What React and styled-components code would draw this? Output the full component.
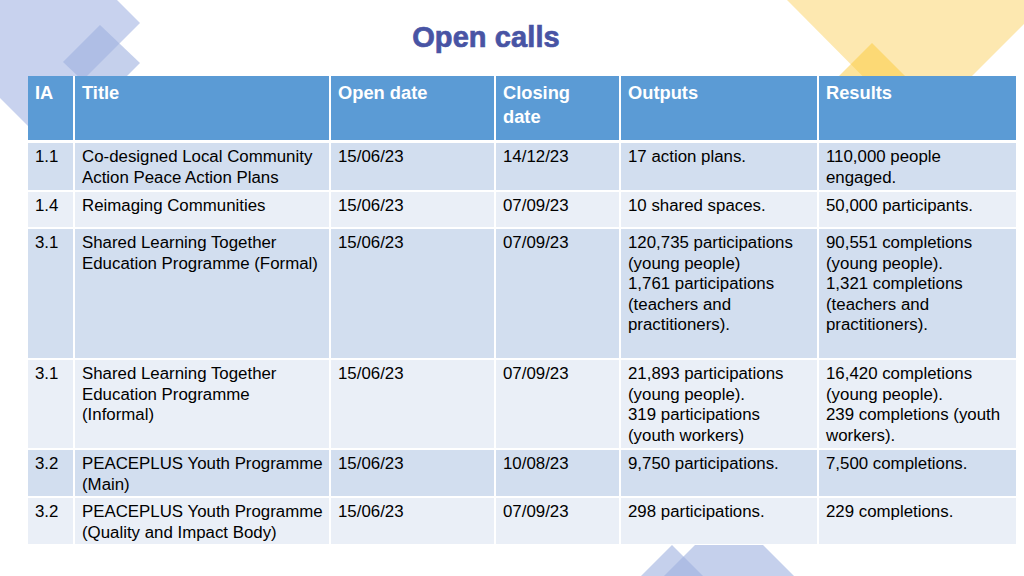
import React from 'react';
import styled, { createGlobalStyle } from 'styled-components';

const GlobalStyle = createGlobalStyle`
  html, body {
    margin: 0;
    padding: 0;
    background: #ffffff;
  }
  body {
    font-family: "Liberation Sans", Arial, sans-serif;
  }
`;

const COLUMNS = '45px 254px 163px 123px 196px 197px';

const Slide = styled.div`
  position: relative;
  width: 1024px;
  height: 576px;
  overflow: hidden;
  background: #ffffff;
`;

const Decor = styled.svg`
  position: absolute;
  inset: 0;
  width: 1024px;
  height: 576px;
  z-index: 0;
`;

const Content = styled.div`
  position: relative;
  z-index: 1;
  display: flex;
  flex-direction: column;
  padding-left: 28px;
`;

const TitleBar = styled.div`
  height: 76px;
  display: flex;
  align-items: center;
  justify-content: center;
  padding-right: 80px;
  padding-bottom: 2px;
  box-sizing: border-box;
`;

const Title = styled.h1`
  margin: 0;
  font-family: "Liberation Sans", Arial, sans-serif;
  font-size: 29px;
  font-weight: 700;
  color: #4854a4;
  -webkit-text-stroke: 0.7px #4854a4;
  letter-spacing: 0.1px;
`;

const Table = styled.div`
  width: 988px;
  display: flex;
  flex-direction: column;
  gap: 2px;
  background: #ffffff;
`;

const Row = styled.div`
  display: grid;
  grid-template-columns: ${COLUMNS};
  column-gap: 2px;
  height: ${props => props.$h}px;
  margin-bottom: ${props => (props.$head ? 1 : 0)}px;
`;

const bandColors = {
  head: '#5b9bd5',
  dark: '#d2deef',
  light: '#eaeff7',
};

const Cell = styled.div`
  background: ${props => bandColors[props.$band]};
  padding: ${props => (props.$band === 'head' ? 5 : 4)}px 0 0 7px;
  box-sizing: border-box;
  overflow: hidden;
  color: ${props => (props.$band === 'head' ? '#ffffff' : '#000000')};
  font-size: ${props => (props.$band === 'head' ? 18.3 : 16.85)}px;
  font-weight: ${props => (props.$band === 'head' ? 700 : 400)};
  line-height: ${props => (props.$band === 'head' ? 23.5 : 20.5)}px;
`;

const Line = styled.span`
  display: block;
  white-space: nowrap;
`;

const headers = [['IA'], ['Title'], ['Open date'], ['Closing', 'date'], ['Outputs'], ['Results']];

const rows = [
  {
    h: 47,
    band: 'dark',
    cells: [
      ['1.1'],
      ['Co-designed Local Community', 'Action Peace Action Plans'],
      ['15/06/23'],
      ['14/12/23'],
      ['17 action plans.'],
      ['110,000 people', 'engaged.'],
    ],
  },
  {
    h: 35,
    band: 'light',
    cells: [
      ['1.4'],
      ['Reimaging Communities'],
      ['15/06/23'],
      ['07/09/23'],
      ['10 shared spaces.'],
      ['50,000 participants.'],
    ],
  },
  {
    h: 129,
    band: 'dark',
    cells: [
      ['3.1'],
      ['Shared Learning Together', 'Education Programme (Formal)'],
      ['15/06/23'],
      ['07/09/23'],
      ['120,735 participations', '(young people)', '1,761 participations', '(teachers and', 'practitioners).'],
      ['90,551 completions', '(young people).', '1,321 completions', '(teachers and', 'practitioners).'],
    ],
  },
  {
    h: 88,
    band: 'light',
    cells: [
      ['3.1'],
      ['Shared Learning Together', 'Education Programme', '(Informal)'],
      ['15/06/23'],
      ['07/09/23'],
      ['21,893 participations', '(young people).', '319 participations', '(youth workers)'],
      ['16,420 completions', '(young people).', '239 completions (youth', 'workers).'],
    ],
  },
  {
    h: 46,
    band: 'dark',
    cells: [
      ['3.2'],
      ['PEACEPLUS Youth Programme', '(Main)'],
      ['15/06/23'],
      ['10/08/23'],
      ['9,750 participations.'],
      ['7,500 completions.'],
    ],
  },
  {
    h: 46,
    band: 'light',
    cells: [
      ['3.2'],
      ['PEACEPLUS Youth Programme', '(Quality and Impact Body)'],
      ['15/06/23'],
      ['07/09/23'],
      ['298 participations.'],
      ['229 completions.'],
    ],
  },
];

const renderLines = lines => lines.map((l, i) => <Line key={i}>{l}</Line>);

const Decorations = () => (
  <Decor viewBox="0 0 1024 576" aria-hidden="true">
    {/* top left diamonds */}
    <polygon points="32.5,-84.5 140,23 32.5,130.5 -75,23" fill="#c8d2ee" />
    <polygon points="100,25 140,63 103,100 63,62" fill="#9fb0df" opacity="0.6" />
    {/* top right triangles */}
    <polygon points="787,0 1048,0 917,131" fill="#fde8b0" />
    <polygon points="872,43 800,115 944,115" fill="#fcc93a" opacity="0.5" />
    {/* bottom triangles */}
    <polygon points="672,545 640,577 704,577" fill="#9fb0df" opacity="0.6" />
    <polygon points="695,545 763,545 795,577 663,577" fill="#9fb0df" opacity="0.6" />
  </Decor>
);

const App = () => {
  return (
    <>
      <GlobalStyle />
      <Slide>
        <Decorations />
        <Content>
          <TitleBar>
            <Title>Open calls</Title>
          </TitleBar>
          <Table>
            <Row $h={64} $head>
              {headers.map((h, i) => (
                <Cell key={i} $band="head">{renderLines(h)}</Cell>
              ))}
            </Row>
            {rows.map((row, r) => (
              <Row key={r} $h={row.h}>
                {row.cells.map((c, i) => (
                  <Cell key={i} $band={row.band}>{renderLines(c)}</Cell>
                ))}
              </Row>
            ))}
          </Table>
        </Content>
      </Slide>
    </>
  );
};

export default App;
